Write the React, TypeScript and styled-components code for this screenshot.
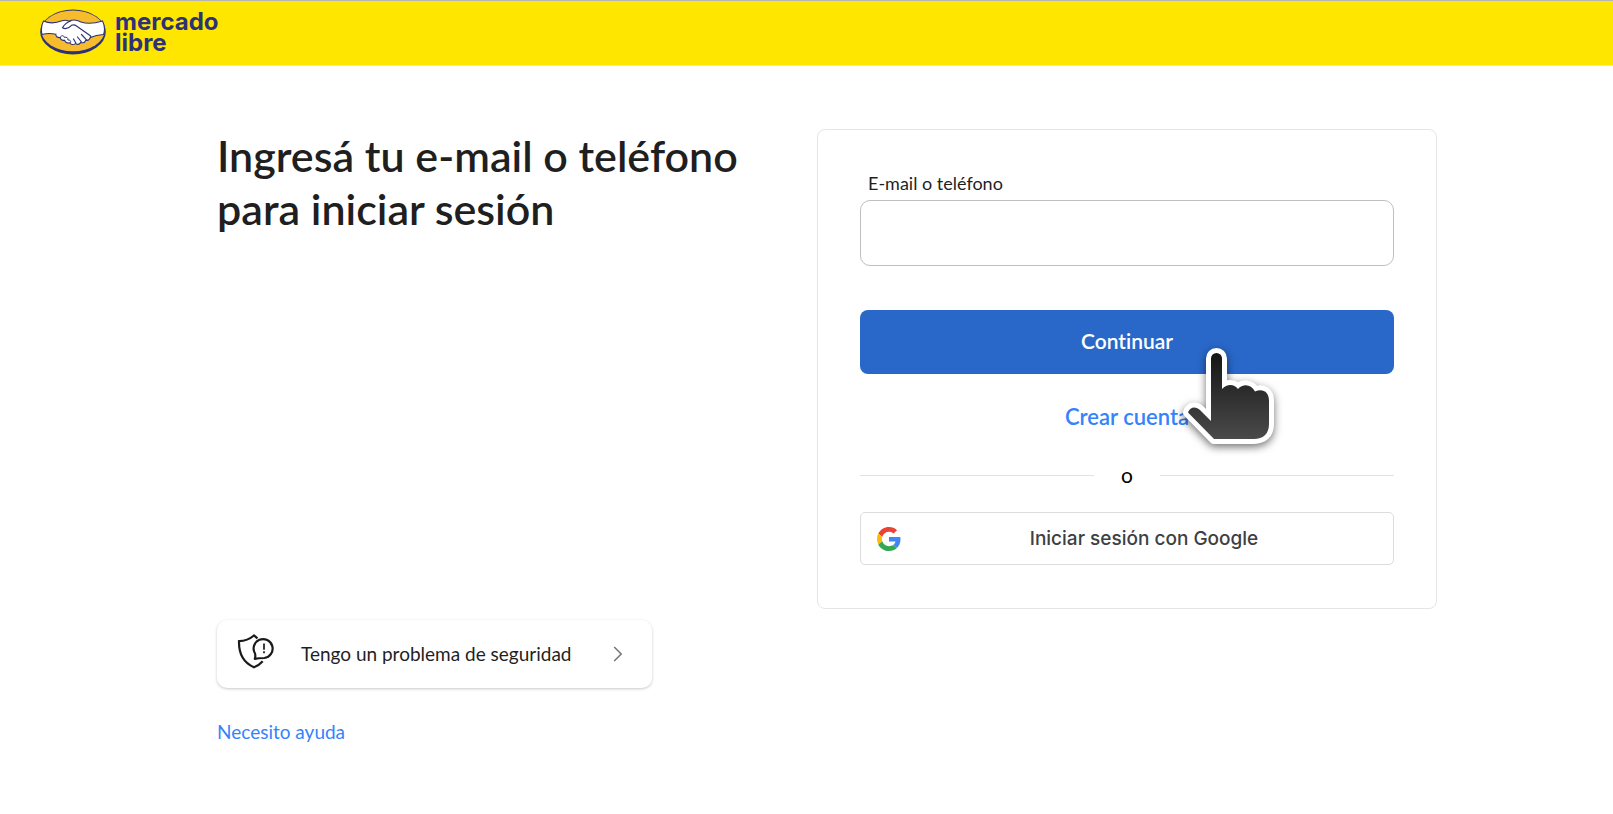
import React from 'react';
import styled, { createGlobalStyle } from 'styled-components';

const GlobalStyle = createGlobalStyle`
  *, *::before, *::after { box-sizing: border-box; }
  body {
    margin: 0;
    background: #fff;
    color: #1f1f1f;
    font-family: Lato, "Liberation Sans", sans-serif;
    font-size: 19px;
    line-height: 24px;
  }
`;

const Header = styled.header`
  display: flex;
  align-items: center;
  height: 66px;
  padding: 0 40px 2px;
  background: #ffe600;
  border-top: 1px solid #b4b5b4;
  border-bottom: 1px solid #e9e6d4;
`;

const Brand = styled.a`
  display: flex;
  align-items: center;
  gap: 9px;
  color: #2d3277;
  text-decoration: none;
`;

const BrandName = styled.span`
  width: min-content;
  font-family: Inter, sans-serif;
  font-size: 24px;
  font-weight: 700;
  line-height: 21px;
`;

const Page = styled.main`
  display: flex;
  justify-content: space-between;
  max-width: 1261px;
  margin: 0 auto;
  padding: 63px 0 40px 41px;
`;

const Intro = styled.section`
  display: flex;
  flex-direction: column;
  align-items: flex-start;
`;

const Title = styled.h1`
  max-width: 560px;
  margin: 0;
  font-size: 43px;
  font-weight: 600;
  line-height: 53px;
`;

const HelpArea = styled.div`
  display: flex;
  flex-direction: column;
  align-items: flex-start;
  gap: 32px;
  padding-top: 385px;
`;

const SecurityLink = styled.a`
  display: flex;
  align-items: center;
  width: 435px;
  height: 68px;
  padding: 0 29px 0 20px;
  border-radius: 10px;
  background: #fff;
  box-shadow: 0 1px 3px rgba(0, 0, 0, 0.22);
  color: inherit;
  text-decoration: none;
`;

const SecurityText = styled.span`
  flex: 1;
  padding-left: 26px;
`;

const TextLink = styled.a`
  color: #3483fa;
  text-decoration: none;
`;

const Card = styled.form`
  display: flex;
  flex-direction: column;
  align-self: flex-start;
  width: 620px;
  padding: 41px 42px 43px;
  border: 1px solid #e5e5e5;
  border-radius: 8px;
`;

const Label = styled.label`
  padding: 0 8px 5px;
  font-size: 18px;
`;

const TextInput = styled.input`
  height: 66px;
  margin-bottom: 44px;
  padding: 0 16px;
  border: 1px solid #bfbfbf;
  border-radius: 10px;
  background: #fff;
  font: inherit;
  outline: none;
`;

const Continue = styled.button`
  height: 64px;
  padding-bottom: 3px;
  border: 0;
  border-radius: 8px;
  background: #2968c8;
  color: #fff;
  font: 600 21px/24px Lato, sans-serif;
  font-variant-ligatures: none;
`;

const Create = styled(TextLink)`
  align-self: center;
  padding: 31px 0 34px;
  font-size: 22px;
  font-weight: 600;
`;

const Divider = styled.div`
  display: flex;
  align-items: center;
  gap: 27px;
  margin-bottom: 25px;
  color: #000;
  font-size: 21px;
  &::before, &::after {
    content: "";
    flex: 1;
    height: 1px;
    background: #e1e1e1;
  }
`;

const GoogleButton = styled.button`
  display: flex;
  align-items: center;
  height: 53px;
  padding: 0 16px;
  border: 1px solid #dadce0;
  border-radius: 5px;
  background: #fff;
  color: #3c4043;
  font: 500 19px/24px Inter, sans-serif;
  span { flex: 1; padding-left: 10px; }
`;

const ActionStack = styled.div`
  position: relative;
  display: flex;
  flex-direction: column;
`;

const Pointer = styled.svg`
  position: absolute;
  top: 32px;
  right: 120px;
  pointer-events: none;
  overflow: visible;
  filter: drop-shadow(0 3px 4px rgba(0, 0, 0, 0.55));
`;

const Handshake = () => (
  <svg width="66" height="46" viewBox="0 0 66 46" aria-hidden="true">
    <ellipse cx="33" cy="23" rx="32.8" ry="22.4" fill="#2d3277" />
    <ellipse cx="33" cy="21.800" rx="31.600" ry="20.400" fill="#f6bc2c" />
    <path
      d="M3.500 12C10 15 16 14.200 22 11.800C25 10.800 27 11.200 29 12.200C33 10.200 37 10.800 41 13C48 15.200 56 14 62.500 12C64.600 16 65 21 63.600 25.500C58 25.800 54 26.800 50.300 28.600C49.600 30.800 47.800 31.600 45.800 31.200C45 33.400 43 34.200 40.800 33.400C39.600 35.400 37.400 35.800 35.400 34.600C33 36.200 30.500 35.600 29.600 33.800C27 34.400 25 33.200 24.600 31.200C22 31.800 20.300 30.400 20.300 28.600C17.300 28.900 15.500 27.200 15.900 25.200C11.500 24.200 7 24 2 25.500C1 21 1.300 16 3.500 12Z"
      fill="#fff"
      stroke="#2d3277"
      strokeWidth="1.100"
    />
    <path
      d="M31 11.800C27 13.300 24 16 22.500 18.800C25.500 20.600 29 19 31.500 16.300C33 15.600 35 15.800 36.500 17L50 26.500C51 27.300 51 28 50.300 28.600M41.500 25.500L46.500 30.800M37.500 28L41.500 33M33.500 30L36 34.200"
      fill="none"
      stroke="#2d3277"
      strokeWidth="1.200"
      strokeLinecap="round"
      strokeLinejoin="round"
    />
    <path d="M20.300 28.400C21 26 24 26.200 24.300 28.400C26.700 27.600 28.300 29 27.900 31C30 30.600 31 32 30.600 33.800" fill="none" stroke="#2d3277" strokeWidth="1" />
  </svg>
);

const ShieldAlert = () => (
  <svg width="38" height="36" viewBox="0 2 38 36" fill="none" stroke="#1a1a1a" strokeWidth="2.200" overflow="visible" aria-hidden="true">
    <path d="M20.500 4.300 17 1.500C12.500 5.300 7.500 7 2 7.200 1.700 20 6.500 28.800 17 33.300c3.500-1.300 6.300-3.300 8.700-6" />
    <path d="M17.800 24.800c.7-2.100.8-3.500.2-5.300A9.500 9.500 0 1 1 27.300 24c-3 .1-6 .2-9.500.8z" strokeLinejoin="round" />
    <path d="M27 9.500v6.200M27 17.300v1.900" strokeWidth="1.700" />
  </svg>
);

const Chevron = () => (
  <svg width="10" height="16" viewBox="0 0 10 16" fill="none" stroke="#737373" strokeWidth="1.500" aria-hidden="true">
    <path d="M1.200 1 8.200 8l-7 7" />
  </svg>
);

const GoogleMark = () => (
  <svg width="24" height="24" viewBox="0 0 48 48" aria-hidden="true">
    <path fill="#EA4335" d="M24 9.500c3.540 0 6.710 1.220 9.210 3.600l6.850-6.850C35.900 2.380 30.470 0 24 0 14.620 0 6.510 5.380 2.560 13.220l7.980 6.190C12.430 13.720 17.740 9.500 24 9.500z" />
    <path fill="#4285F4" d="M46.980 24.550c0-1.570-.15-3.090-.38-4.550H24v9.020h12.940c-.58 2.960-2.260 5.480-4.780 7.180l7.730 6c4.510-4.180 7.090-10.360 7.090-17.650z" />
    <path fill="#FBBC05" d="M10.530 28.590c-.48-1.450-.76-2.990-.76-4.590s.27-3.140.76-4.590l-7.980-6.190C.92 16.460 0 20.120 0 24c0 3.880.92 7.540 2.560 10.780l7.970-6.190z" />
    <path fill="#34A853" d="M24 48c6.480 0 11.930-2.130 15.890-5.810l-7.730-6c-2.150 1.450-4.920 2.300-8.160 2.300-6.260 0-11.570-4.220-13.470-9.910l-7.980 6.190C6.510 42.620 14.620 48 24 48z" />
  </svg>
);

const HandPointer = () => (
  <Pointer width="98" height="104" viewBox="0 0 98 104" aria-hidden="true">
    <defs>
      <linearGradient id="hand" x1="0" y1="0" x2="0" y2="1">
        <stop offset="0" stopColor="#151515" />
        <stop offset="1" stopColor="#4a4a4a" />
      </linearGradient>
    </defs>
    <path
      d="M35 79V16.500a5.500 5.500 0 0 1 11 0V47c5-5.500 12-5.500 16 0 5-5.500 13-5 17 2.500 8-3.500 14 1 14 9V82c0 10-6 15-15 15H38L12 70.500c2-6 8-6.500 12-2.500z"
      fill="url(#hand)"
      stroke="#fff"
      strokeWidth="10"
      strokeLinejoin="round"
      paintOrder="stroke"
    />
  </Pointer>
);

export default function App() {
  return (
    <>
      <GlobalStyle />
      <Header>
        <Brand href="#" aria-label="mercado libre">
          <Handshake />
          <BrandName>mercado libre</BrandName>
        </Brand>
      </Header>
      <Page>
        <Intro>
          <Title>Ingresá tu e-mail o teléfono para iniciar sesión</Title>
          <HelpArea>
            <SecurityLink href="#">
              <ShieldAlert />
              <SecurityText>Tengo un problema de seguridad</SecurityText>
              <Chevron />
            </SecurityLink>
            <TextLink href="#">Necesito ayuda</TextLink>
          </HelpArea>
        </Intro>
        <Card onSubmit={(e) => e.preventDefault()}>
          <Label htmlFor="user">E-mail o teléfono</Label>
          <TextInput id="user" type="text" />
          <ActionStack>
            <Continue type="submit">Continuar</Continue>
            <Create href="#">Crear cuenta</Create>
            <HandPointer />
          </ActionStack>
          <Divider>o</Divider>
          <GoogleButton type="button">
            <GoogleMark />
            <span>Iniciar sesión con Google</span>
          </GoogleButton>
        </Card>
      </Page>
    </>
  );
}
